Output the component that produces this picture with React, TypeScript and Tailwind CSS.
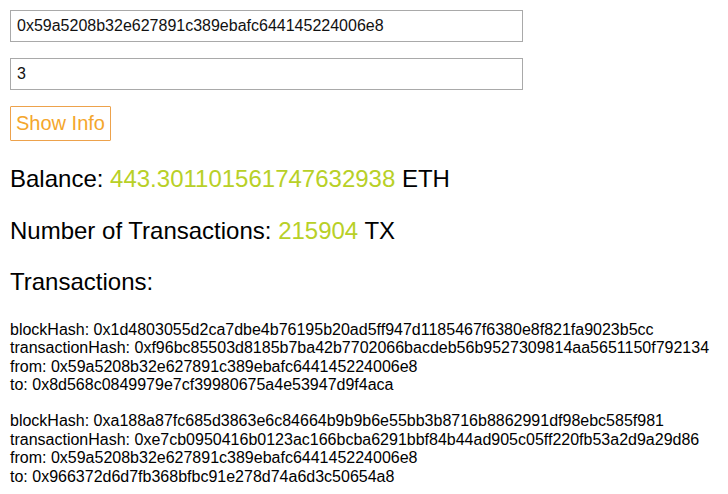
import { useState } from 'react'

const txs = [
  {
    blockHash: '0x1d4803055d2ca7dbe4b76195b20ad5ff947d1185467f6380e8f821fa9023b5cc',
    transactionHash: '0xf96bc85503d8185b7ba42b7702066bacdeb56b9527309814aa5651150f792134',
    from: '0x59a5208b32e627891c389ebafc644145224006e8',
    to: '0x8d568c0849979e7cf39980675a4e53947d9f4aca',
  },
  {
    blockHash: '0xa188a87fc685d3863e6c84664b9b9b6e55bb3b8716b8862991df98ebc585f981',
    transactionHash: '0xe7cb0950416b0123ac166bcba6291bbf84b44ad905c05ff220fb53a2d9a29d86',
    from: '0x59a5208b32e627891c389ebafc644145224006e8',
    to: '0x966372d6d7fb368bfbc91e278d74a6d3c50654a8',
  },
]

export default function App() {
  const [address, setAddress] = useState('0x59a5208b32e627891c389ebafc644145224006e8')
  const [count, setCount] = useState('3')

  return (
    <div className="p-[10px] font-['Liberation_Sans',Arial,sans-serif] text-[16px] text-black bg-white min-h-[494px]">
      {/* Inputs */}
      <input
        value={address}
        onChange={(e) => setAddress(e.target.value)}
        className="block w-[513px] h-[32px] px-[6px] border border-[#a9a9a9] text-[16px] text-[#111] outline-none"
      />
      <input
        value={count}
        onChange={(e) => setCount(e.target.value)}
        className="block mt-[16px] w-[513px] h-[32px] px-[6px] border border-[#a9a9a9] text-[16px] text-[#111] outline-none"
      />
      <button className="block mt-[16px] px-[5px] py-[5px] border border-[#eda24c] text-[20px] leading-[23px] text-[#f4a62c] bg-white rounded-[1px]">
        Show Info
      </button>

      {/* Summary */}
      <div className="mt-[24px] text-[24px] leading-[27.6px]">
        Balance: <span className="text-[#b8d027]">443.301101561747632938</span> ETH
      </div>
      <div className="mt-[24px] text-[24px] leading-[27.6px]">
        Number of Transactions: <span className="text-[#b8d027]">215904</span> TX
      </div>
      <div className="mt-[24px] text-[24px] leading-[27.6px]">Transactions:</div>

      {/* Transaction list */}
      <div className="mt-[25px] flex flex-col gap-[18px] leading-[18.4px] whitespace-nowrap">
        {txs.map((tx) => (
          <div key={tx.transactionHash}>
            <div>blockHash: {tx.blockHash}</div>
            <div>transactionHash: {tx.transactionHash}</div>
            <div>from: {tx.from}</div>
            <div>to: {tx.to}</div>
          </div>
        ))}
      </div>
    </div>
  )
}
